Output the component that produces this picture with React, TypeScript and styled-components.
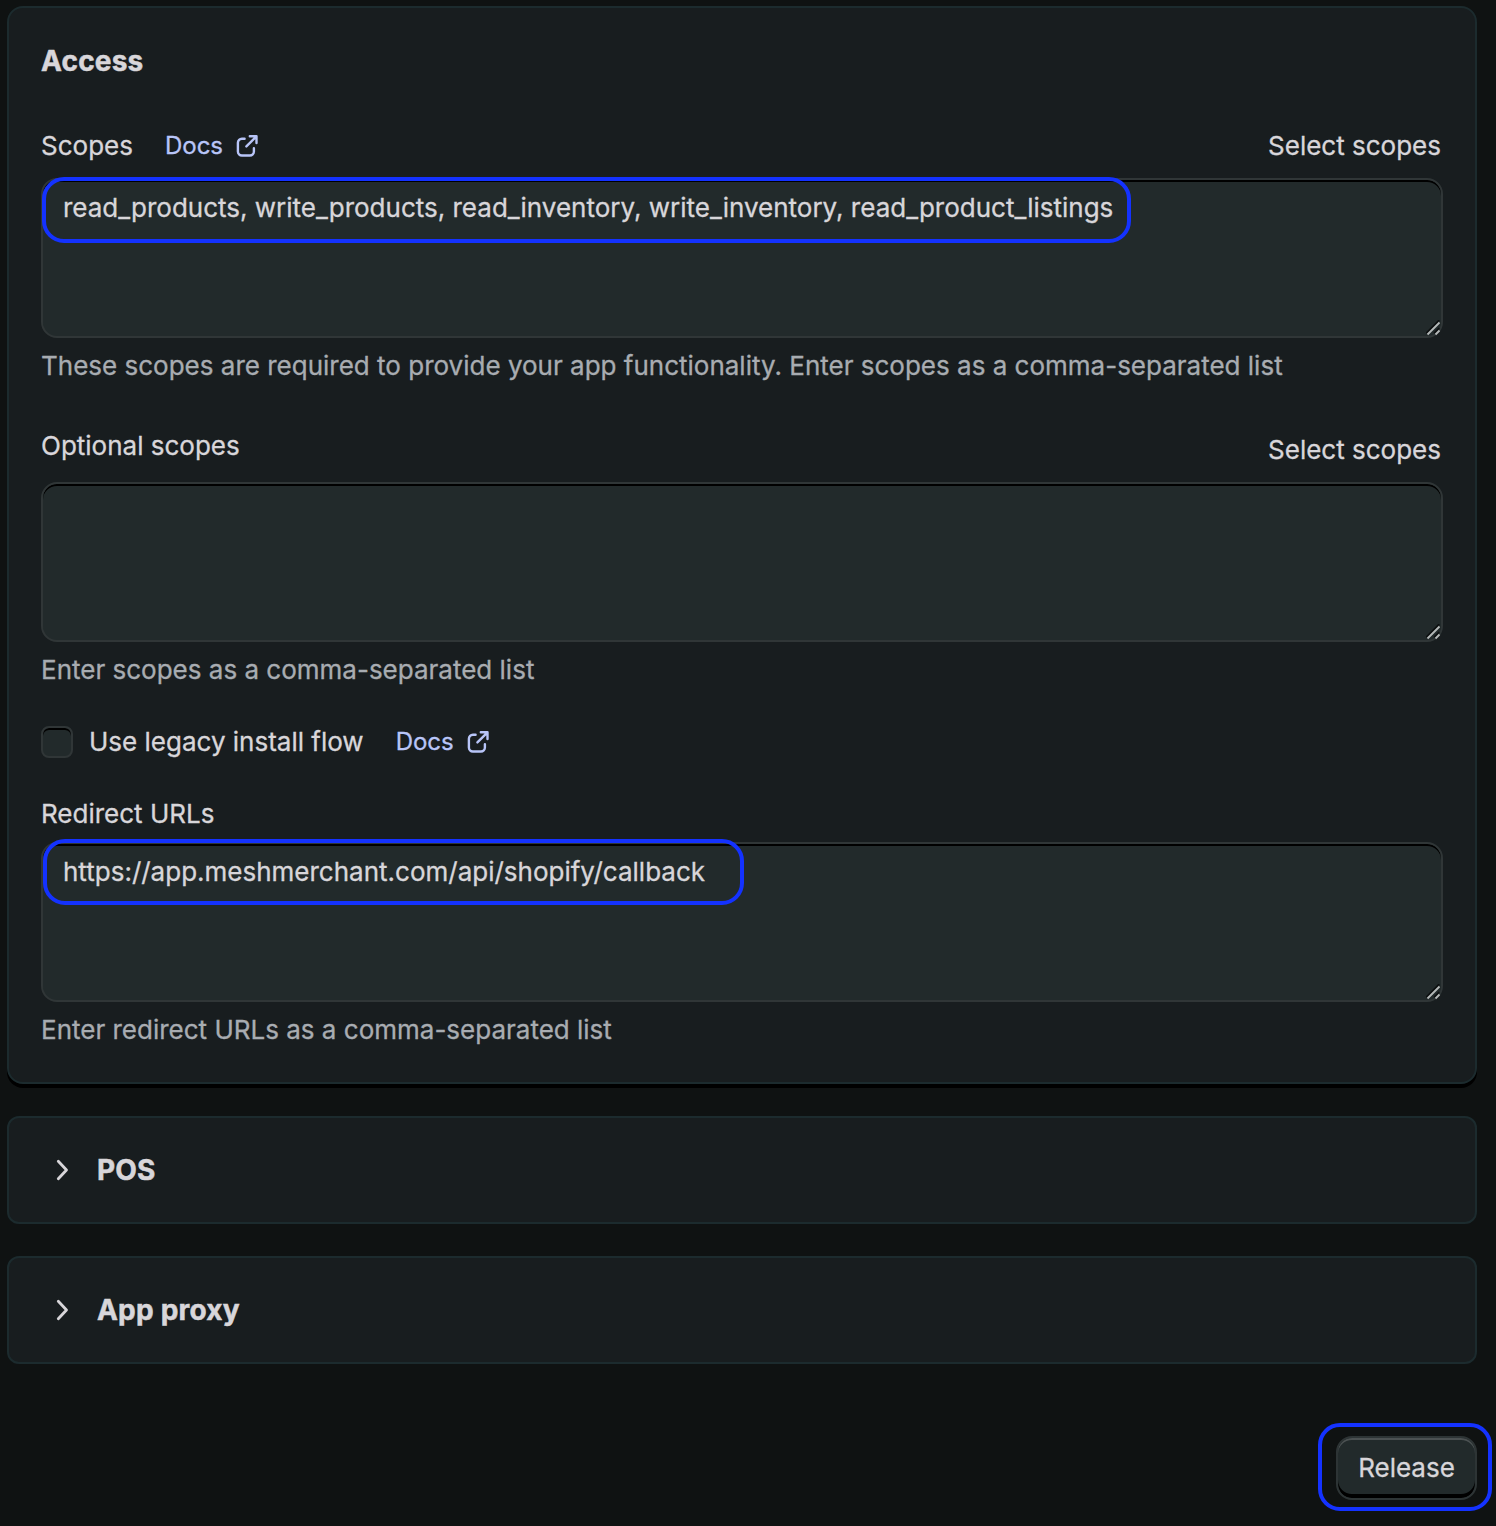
import React from "react";
import styled, { createGlobalStyle } from "styled-components";

const color = {
  page: "#0f1212",
  card: "#181d1f",
  cardBorder: "#1c2b2e",
  field: "#222a2b",
  fieldBorder: "#303637",
  text: "#d8d6da",
  subdued: "#a8acb1",
  link: "#b8c5f8",
  marker: "#1432ff",
};

const GlobalStyle = createGlobalStyle`
  * { box-sizing: border-box; }
  body {
    margin: 0;
    background: ${color.page};
    color: ${color.text};
    font-family: Inter, "Liberation Sans", sans-serif;
    font-size: 26px;
    font-weight: 400;
    line-height: 40px;
    -webkit-font-smoothing: antialiased;
    -webkit-text-stroke: 0.3px currentColor;
  }
`;

const Page = styled.main`
  width: 1496px;
  height: 1526px;
  padding: 6px 19px 0 7px;
  display: flex;
  flex-direction: column;
  gap: 32px;
  overflow: hidden;
`;

const Card = styled.section`
  height: 1078px;
  flex: none;
  padding: 33px 32px 0;
  background: ${color.card};
  border: 2px solid ${color.cardBorder};
  border-radius: 16px;
  box-shadow: 0 4px 0 #000;
  display: flex;
  flex-direction: column;
`;

const Title = styled.h2`
  margin: 0;
  font-size: 28px;
  font-weight: 700;
  line-height: 40px;
  letter-spacing: 0.2px;
  -webkit-text-stroke: 0.5px currentColor;
`;

const Field = styled.div<{ $top: number }>`
  margin-top: ${(p) => p.$top}px;
  display: flex;
  flex-direction: column;
`;

const LabelRow = styled.div<{ $height: number }>`
  height: ${(p) => p.$height}px;
  display: flex;
  justify-content: space-between;
  align-items: flex-start;
`;

const LabelGroup = styled.div`
  display: flex;
  gap: 32px;
`;

const TextButton = styled.button<{ $drop?: number }>`
  margin: ${(p) => p.$drop ?? 0}px 2px 0 0;
  padding: 0;
  border: 0;
  background: none;
  color: inherit;
  font: inherit;
`;

const Link = styled.a`
  display: inline-flex;
  align-items: center;
  gap: 8px;
  font-size: 24px;
  color: ${color.link};
`;

const AreaWrap = styled.div`
  position: relative;
  height: 160px;
`;

const Area = styled.textarea`
  display: block;
  width: 100%;
  height: 160px;
  padding: 8px 20px;
  resize: none;
  outline: none;
  color: ${color.text};
  font: inherit;
  background: ${color.field};
  border: 2px solid ${color.fieldBorder};
  border-radius: 16px;
  box-shadow: inset 0 2px 0 #000;
`;

const Grip = styled.svg`
  position: absolute;
  right: 1px;
  bottom: 2px;
`;

const Marker = styled.span<{ $x: number; $y: number; $w: number; $h: number }>`
  position: absolute;
  left: ${(p) => p.$x}px;
  top: ${(p) => p.$y}px;
  width: ${(p) => p.$w}px;
  height: ${(p) => p.$h}px;
  border: 4px solid ${color.marker};
  border-radius: 22px;
  pointer-events: none;
`;

const Help = styled.p`
  margin: 8px 0 0;
  color: ${color.subdued};
`;

const CheckRow = styled.div`
  margin-top: 32px;
  display: flex;
  align-items: center;
  gap: 32px;
`;

const CheckLabel = styled.label`
  display: flex;
  align-items: center;
  gap: 16px;
`;

const Checkbox = styled.input`
  appearance: none;
  width: 32px;
  height: 32px;
  margin: 0;
  background: ${color.field};
  border: 2px solid ${color.fieldBorder};
  border-radius: 8px;
  box-shadow: inset 0 2px 0 #000;
`;

const Collapsed = styled.section`
  height: 108px;
  flex: none;
  padding: 0 36px;
  display: flex;
  align-items: center;
  gap: 16px;
  background: ${color.card};
  border: 2px solid ${color.cardBorder};
  border-radius: 12px;
`;

const Footer = styled.footer`
  margin-top: 40px;
  display: flex;
  justify-content: flex-end;
`;

const ReleaseWrap = styled.div`
  position: relative;
`;

const ReleaseButton = styled.button`
  display: block;
  width: 141px;
  height: 64px;
  padding: 0 0 1px;
  color: ${color.text};
  font: inherit;
  background: ${color.field};
  border: 2px solid #2d3435;
  border-radius: 16px;
  box-shadow: inset 0 2px 0 #4b5152, inset 0 -4px 0 #000;
`;

const DocsLink = () => (
  <Link>
    Docs
    <svg width="32" height="32" viewBox="0 0 32 32" fill="none" stroke="currentColor" strokeWidth="2.4" strokeLinecap="round" strokeLinejoin="round">
      <path d="M13.6 8.7H10.9a4 4 0 0 0-4 4v8.8a4 4 0 0 0 4 4h8a4 4 0 0 0 4-4v-3.2" />
      <path d="M18.8 6.3h6.7v6.7M25 6.8 15.4 16.4" />
    </svg>
  </Link>
);

const TextField = ({ value, children }: { value?: string; children?: React.ReactNode }) => (
  <AreaWrap>
    <Area defaultValue={value} spellCheck={false} />
    <Grip width="16" height="16" viewBox="0 0 16 16" fill="none" strokeWidth="1.8">
      <path d="M.2 13.2 13.2.2M8.2 13.2l5-5" stroke="#0c0f10" />
      <path d="M1.5 14.5l12-12M9.5 14.5l4-4" stroke="#b4b8b8" />
    </Grip>
    {children}
  </AreaWrap>
);

const Panel = ({ title }: { title: string }) => (
  <Collapsed>
    <svg width="36" height="36" viewBox="0 0 36 36" fill="none" stroke={color.text} strokeWidth="2.8" strokeLinecap="round" strokeLinejoin="round">
      <path d="M13.3 9.3 21.5 18 13.3 26.7" />
    </svg>
    <Title>{title}</Title>
  </Collapsed>
);

export default function App() {
  return (
    <>
      <GlobalStyle />
      <Page>
        <Card>
          <Title>Access</Title>
          <Field $top={45}>
            <LabelRow $height={52}>
              <LabelGroup>
                <span>Scopes</span>
                <DocsLink />
              </LabelGroup>
              <TextButton>Select scopes</TextButton>
            </LabelRow>
            <TextField value="read_products, write_products, read_inventory, write_inventory, read_product_listings">
              <Marker $x={1} $y={-1} $w={1089} $h={66} />
            </TextField>
            <Help>These scopes are required to provide your app functionality. Enter scopes as a comma-separated list</Help>
          </Field>
          <Field $top={40}>
            <LabelRow $height={56}>
              <span>Optional scopes</span>
              <TextButton $drop={4}>Select scopes</TextButton>
            </LabelRow>
            <TextField />
            <Help>Enter scopes as a comma-separated list</Help>
          </Field>
          <CheckRow>
            <CheckLabel>
              <Checkbox type="checkbox" />
              Use legacy install flow
            </CheckLabel>
            <DocsLink />
          </CheckRow>
          <Field $top={32}>
            <LabelRow $height={48}>
              <span>Redirect URLs</span>
            </LabelRow>
            <TextField value="https://app.meshmerchant.com/api/shopify/callback">
              <Marker $x={2} $y={-3} $w={701} $h={66} />
            </TextField>
            <Help>Enter redirect URLs as a comma-separated list</Help>
          </Field>
        </Card>
        <Panel title="POS" />
        <Panel title="App proxy" />
        <Footer>
          <ReleaseWrap>
            <ReleaseButton>Release</ReleaseButton>
            <Marker $x={-18} $y={-13} $w={174} $h={88} />
          </ReleaseWrap>
        </Footer>
      </Page>
    </>
  );
}
